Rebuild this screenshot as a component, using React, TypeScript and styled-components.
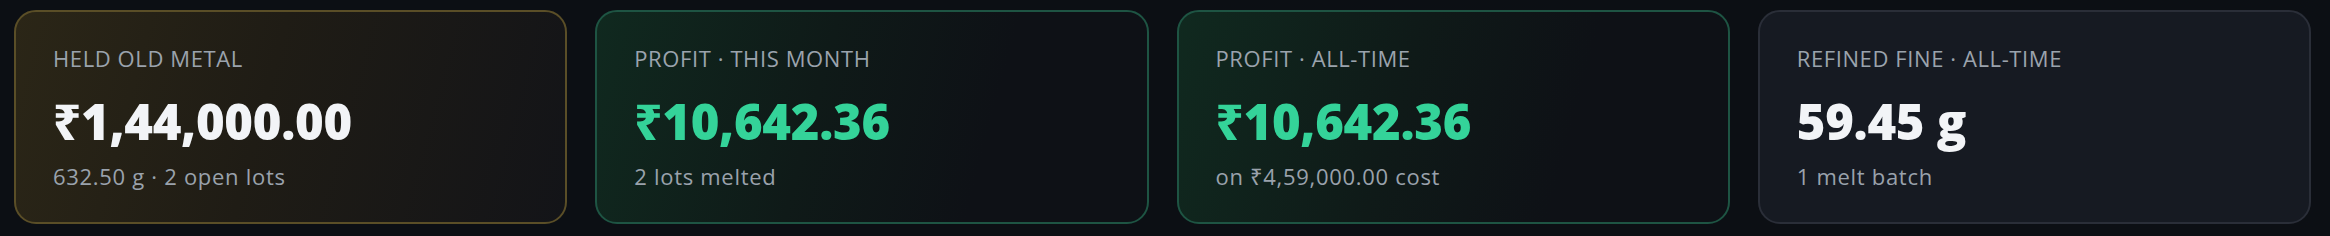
import React from "react";
import styled, { createGlobalStyle, css } from "styled-components";

const GlobalStyle = createGlobalStyle`
  html, body {
    margin: 0;
    padding: 0;
    background: #0c0f14;
  }
  body {
    font-family: "Open Sans", "Noto Sans", sans-serif;
  }
`;

type Tone = "gold" | "green" | "plain";

const Row = styled.div`
  display: grid;
  grid-template-columns: repeat(4, 1fr);
  gap: 28px;
  padding: 10px 19px 12px 14px;
  height: 236px;
  box-sizing: border-box;
`;

const toneStyles = {
  gold: css`
    border-color: #5a4e27;
    background: linear-gradient(105deg, #2b2617 0%, #1f1c15 45%, #131418 100%);
  `,
  green: css`
    border-color: #1e5443;
    background: linear-gradient(105deg, #10291f 0%, #0f1a18 40%, #0e1116 70%, #0e1116 100%);
  `,
  plain: css`
    border-color: #2a2e38;
    background: #161a22;
  `,
};

const Card = styled.div<{ $tone: Tone }>`
  border: 2px solid;
  border-radius: 22px;
  padding: 33px 37px;
  display: flex;
  flex-direction: column;
  ${(p) => toneStyles[p.$tone]}
`;

const Label = styled.div`
  font-size: 22px;
  line-height: 26px;
  color: #9ba3ad;
  letter-spacing: 0.6px;
  text-transform: uppercase;
`;

const Value = styled.div<{ $green?: boolean }>`
  margin-top: 22px;
  font-size: 49px;
  line-height: 56px;
  font-weight: 800;
  letter-spacing: -0.3px;
  color: ${(p) => (p.$green ? "#34d399" : "#f2f4f7")};
`;

const Sub = styled.div`
  margin-top: 14px;
  font-size: 22px;
  line-height: 26px;
  letter-spacing: 0.7px;
  color: #9aa2ac;
`;

const stats: { label: string; value: string; sub: string; tone: Tone; green?: boolean }[] = [
  { label: "Held old metal", value: "₹1,44,000.00", sub: "632.50 g · 2 open lots", tone: "gold" },
  { label: "Profit · this month", value: "₹10,642.36", sub: "2 lots melted", tone: "green", green: true },
  { label: "Profit · all-time", value: "₹10,642.36", sub: "on ₹4,59,000.00 cost", tone: "green", green: true },
  { label: "Refined fine · all-time", value: "59.45 g", sub: "1 melt batch", tone: "plain" },
];

export default function App() {
  return (
    <>
      <GlobalStyle />
      <Row>
        {stats.map((s) => (
          <Card key={s.label} $tone={s.tone}>
            <Label>{s.label}</Label>
            <Value $green={s.green}>{s.value}</Value>
            <Sub>{s.sub}</Sub>
          </Card>
        ))}
      </Row>
    </>
  );
}
